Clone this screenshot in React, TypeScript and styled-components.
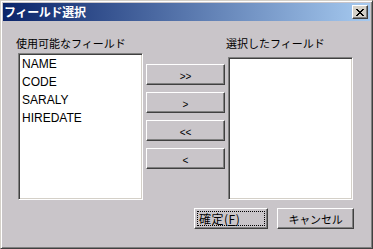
import React from "react";
import styled, { createGlobalStyle } from "styled-components";

const Global = createGlobalStyle`
  html, body { margin: 0; padding: 0; background: #c9c5c9; }
  * { box-sizing: border-box; }
`;

const FACE = "#c9c5c9";
const JP = `"Noto Sans CJK JP", "Liberation Sans", sans-serif`;

const Window = styled.div`
  width: 373px;
  height: 249px;
  display: flex;
  flex-direction: column;
  background: ${FACE};
  border: 1px solid;
  border-color: #d4d0c8 #404040 #404040 #d4d0c8;
  box-shadow: inset 1px 1px #ffffff, inset -1px -1px #808080;
  padding: 2px;
`;

const Caption = styled.div`
  height: 18px;
  display: flex;
  align-items: center;
  justify-content: space-between;
  padding: 0 2px 0 1px;
  background: linear-gradient(to right, #0a246a, #a6caf0);
`;

const Title = styled.span`
  font-family: ${JP};
  font-weight: bold;
  font-size: 12px;
  letter-spacing: -0.3px;
  color: #ffffff;
  line-height: 18px;
`;

const CloseBtn = styled.div`
  width: 16px;
  height: 14px;
  display: flex;
  align-items: center;
  justify-content: center;
  background: #d4d0c8;
  border: 1px solid;
  border-color: #ffffff #404040 #404040 #ffffff;
  box-shadow: inset -1px -1px #808080;
  padding-right: 1px;
`;

const Body = styled.div`
  flex: 1;
  display: flex;
  flex-direction: column;
  padding: 15px 16px 0 15px;
`;

const MainRow = styled.div`
  display: flex;
  align-items: flex-start;
  gap: 3px;
`;

const Column = styled.div`
  display: flex;
  flex-direction: column;
  width: 125px;
`;

const Label = styled.div<{ $gap: number }>`
  font-family: ${JP};
  font-size: 11px;
  line-height: 14px;
  height: 14px;
  color: #000;
  letter-spacing: 0px;
  margin-left: -2px;
  margin-bottom: ${(p) => p.$gap}px;
  white-space: nowrap;
`;

const ListBox = styled.div<{ $h: number }>`
  width: 125px;
  height: ${(p) => p.$h}px;
  background: #ffffff;
  border: 1px solid;
  border-color: #808080 #ffffff #ffffff #808080;
  box-shadow: inset 1px 1px #404040, inset -1px -1px #d4d0c8;
  padding: 1px 2px;
`;

const Item = styled.div`
  font-family: "Liberation Sans", Arial, sans-serif;
  font-size: 12px;
  line-height: 18px;
  height: 18px;
  padding-left: 1px;
  color: #000;
`;

const MidColumn = styled.div`
  display: flex;
  flex-direction: column;
  gap: 7px;
  padding-top: 28px;
`;

const RaisedButton = styled.div<{ $w: number }>`
  width: ${(p) => p.$w}px;
  height: 21px;
  display: flex;
  align-items: center;
  justify-content: center;
  background: ${FACE};
  border: 1px solid;
  border-color: #ffffff #404040 #404040 #ffffff;
  box-shadow: inset -1px -1px #808080;
  color: #000;
`;

const ArrowText = styled.span`
  font-family: "Liberation Sans", Arial, sans-serif;
  font-size: 10px;
  padding-top: 3px;
`;

const Footer = styled.div`
  display: flex;
  justify-content: flex-end;
  gap: 9px;
  margin-top: 8px;
`;

const Focus = styled.div`
  display: flex;
  align-items: center;
  justify-content: flex-start;
  padding-left: 1px;
  width: calc(100% - 4px);
  height: calc(100% - 4px);
  border: 1px dotted #000;
`;

const BtnText = styled.span<{ $size: number; $spacing: number }>`
  font-family: ${JP};
  font-size: ${(p) => p.$size}px;
  line-height: 14px;
  color: #000;
  letter-spacing: ${(p) => p.$spacing}px;
`;

const U = styled.span`
  text-decoration: underline;
`;

const XPixels: [number, number][] = [
  [0, 0], [1, 0], [6, 0], [7, 0],
  [1, 1], [2, 1], [5, 1], [6, 1],
  [2, 2], [3, 2], [4, 2], [5, 2],
  [3, 3], [4, 3],
  [2, 4], [3, 4], [4, 4], [5, 4],
  [1, 5], [2, 5], [5, 5], [6, 5],
  [0, 6], [1, 6], [6, 6], [7, 6],
];

const CloseIcon = () => (
  <svg width="8" height="7" viewBox="0 0 8 7" shapeRendering="crispEdges">
    {XPixels.map(([x, y]) => (
      <rect key={`${x}-${y}`} x={x} y={y} width="1" height="1" fill="#000" />
    ))}
  </svg>
);

const items = ["NAME", "CODE", "SARALY", "HIREDATE"];
const arrows = [">>", ">", "<<", "<"];

export default function App() {
  return (
    <>
      <Global />
      <Window>
        <Caption>
          <Title>フィールド選択</Title>
          <CloseBtn>
            <CloseIcon />
          </CloseBtn>
        </Caption>
        <Body>
          <MainRow>
            <Column>
              <Label $gap={3}>使用可能なフィールド</Label>
              <ListBox $h={147}>
                {items.map((it) => (
                  <Item key={it}>{it}</Item>
                ))}
              </ListBox>
            </Column>
            <MidColumn>
              {arrows.map((a) => (
                <RaisedButton key={a} $w={79}>
                  <ArrowText>{a}</ArrowText>
                </RaisedButton>
              ))}
            </MidColumn>
            <Column>
              <Label $gap={7}>選択したフィールド</Label>
              <ListBox $h={143}>{null}</ListBox>
            </Column>
          </MainRow>
          <Footer>
            <RaisedButton $w={74}>
              <Focus>
                <BtnText $size={12} $spacing={0.5}>
                  確定(<U>F</U>)
                </BtnText>
              </Focus>
            </RaisedButton>
            <RaisedButton $w={77}>
              <BtnText $size={11} $spacing={-0.2}>キャンセル</BtnText>
            </RaisedButton>
          </Footer>
        </Body>
      </Window>
    </>
  );
}
